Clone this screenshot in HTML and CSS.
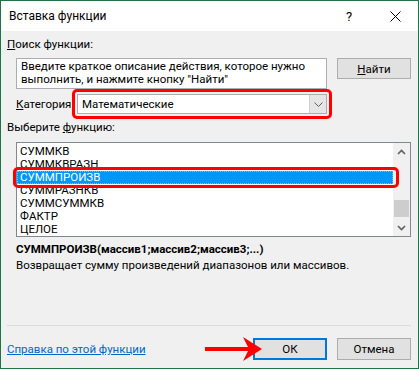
FILE: index.html
```html
<!DOCTYPE html>
<html lang="ru">
  <head>
    <meta charset="UTF-8" />
    <title>Вставка функции</title>
    <link rel="stylesheet" href="styles.css">
  </head>
  <body>
    <div class="dialog">
      <div class="titlebar">
        <span class="title">Вставка функции</span>
        <span class="title-btn help">?</span>
        <span class="title-btn">
          <svg width="11" height="11" viewBox="0 0 11 11">
            <path d="M0.5 0.5 L10.5 10.5 M10.5 0.5 L0.5 10.5" stroke="#000" stroke-width="1" fill="none" />
          </svg>
        </span>
      </div>

      <div class="content">
        <div class="label"><u>П</u>оиск функции:</div>

        <div class="search-row">
          <div class="search-box">Введите краткое описание действия, которое нужно выполнить, и нажмите кнопку "Найти"</div>
          <button class="btn find"><u>Н</u>айти</button>
        </div>

        <div class="category-row">
          <span class="cat-label"><u>К</u>атегория</span>
          <div class="mark">
            <div class="select">
              <span class="select-value">Математические</span>
              <span class="select-drop">
                <svg width="9" height="5" viewBox="0 0 9 5">
                  <polyline points="0.5,0.5 4.5,4.5 8.5,0.5" stroke="#606060" stroke-width="1" fill="none" />
                </svg>
              </span>
            </div>
          </div>
        </div>

        <div class="label list-label">Выберите <u>ф</u>ункцию:</div>

        <div class="listbox">
          <div class="items">
            <div class="item">СУММКВ</div>
            <div class="item">СУММКВРАЗН</div>
            <div class="item selected">СУММПРОИЗВ</div>
            <div class="item">СУММРАЗНКВ</div>
            <div class="item">СУММСУММКВ</div>
            <div class="item">ФАКТР</div>
            <div class="item">ЦЕЛОЕ</div>
          </div>
          <div class="scrollbar">
            <span class="arrow">
              <svg width="9" height="6" viewBox="0 0 9 6">
                <polyline points="1,5 4.5,1.5 8,5" stroke="#606060" stroke-width="1.6" fill="none" />
              </svg>
            </span>
            <div class="track"><div class="thumb"></div></div>
            <span class="arrow">
              <svg width="9" height="6" viewBox="0 0 9 6">
                <polyline points="1,1 4.5,4.5 8,1" stroke="#606060" stroke-width="1.6" fill="none" />
              </svg>
            </span>
          </div>
        </div>

        <div class="signature">СУММПРОИЗВ(массив1;массив2;массив3;...)</div>
        <div class="desc">Возвращает сумму произведений диапазонов или массивов.</div>

        <div class="separator"></div>

        <div class="footer">
          <a class="help-link">Справка по этой функции</a>
          <svg class="pointer" width="58" height="24" viewBox="0 0 58 24">
            <rect x="0" y="10" width="46" height="4" fill="#f00" />
            <polygon points="38,0 57,12 38,24 44,12" fill="#f00" />
          </svg>
          <button class="btn ok">ОК</button>
          <button class="btn cancel">Отмена</button>
        </div>
      </div>
    </div>
  </body>
</html>
```

FILE: styles.css
```css
* {
  box-sizing: border-box;
}

body {
  margin: 0;
  font-family: Roboto, "Noto Sans", sans-serif;
  font-size: 11.5px;
  color: #000;
  background: #fff;
}

.dialog {
  width: 419px;
  height: 369px;
  border: 1px solid #217346;
  background: #f0f0f0;
  display: flex;
  flex-direction: column;
}

.titlebar {
  height: 30px;
  background: #fff;
  display: flex;
  align-items: center;
}

.title {
  flex: 1;
  padding-left: 8px;
  font-size: 12px;
}

.title-btn {
  width: 46px;
  height: 30px;
  display: flex;
  align-items: center;
  justify-content: center;
}

.help {
  font-size: 13px;
}

.content {
  flex: 1;
  display: flex;
  flex-direction: column;
  padding: 0 7px 0 6px;
}

.label {
  line-height: 15px;
  margin-top: 6px;
}

.search-row {
  display: flex;
  align-items: flex-start;
  margin-top: 6px;
  padding-left: 9px;
}

.search-box {
  width: 311px;
  height: 31px;
  background: #fff;
  border: 1px solid #abadb3;
  padding: 1px 4px;
  line-height: 13px;
}

.btn {
  width: 74px;
  height: 21px;
  padding: 0;
  background: #e1e1e1;
  border: 1px solid #adadad;
  font: inherit;
  color: #000;
}

.find {
  margin-left: 10px;
}

.category-row {
  display: flex;
  align-items: center;
  padding-left: 9px;
}

.cat-label {
  width: 56px;
}

.mark {
  width: 260px;
  border: 3px solid #f00;
  border-radius: 5px;
  padding: 2px;
  background: #f0f0f0;
}

.select {
  height: 20px;
  display: flex;
  background: #fff;
  border: 1px solid #abadb3;
}

.select-value {
  flex: 1;
  line-height: 18px;
  padding-left: 4px;
}

.select-drop {
  width: 17px;
  display: flex;
  align-items: center;
  justify-content: center;
  background: #e5e5e5;
  border-left: 1px solid #cccccc;
}

.list-label {
  margin-top: 1px;
}

.listbox {
  display: flex;
  width: 395px;
  height: 95px;
  margin: 7px 0 0 9px;
  background: #fff;
  border: 1px solid #828790;
}

.items {
  flex: 1;
  padding-top: 2px;
}

.item {
  height: 13px;
  line-height: 13px;
  padding-left: 3px;
}

.selected {
  position: relative;
  background: #0097fb;
  color: #fff;
  outline: 1px dotted #e8a060;
  outline-offset: -1px;
}

.selected::after {
  content: "";
  position: absolute;
  left: -4px;
  right: -6px;
  top: -4px;
  bottom: -4px;
  border: 3px solid #f00;
  border-radius: 5px;
}

.scrollbar {
  width: 17px;
  display: flex;
  flex-direction: column;
  background: #f0f0f0;
}

.arrow {
  height: 17px;
  display: flex;
  align-items: center;
  justify-content: center;
}

.track {
  flex: 1;
}

.thumb {
  width: 15px;
  height: 17px;
  margin: 40px 0 0 1px;
  background: #cdcdcd;
}

.signature {
  font-weight: bold;
  line-height: 16px;
  margin-top: 4px;
  padding-left: 9px;
}

.desc {
  line-height: 16px;
  padding-left: 9px;
}

.separator {
  height: 1px;
  margin-top: 52px;
  background: #dcdcdc;
}

.footer {
  position: relative;
  display: flex;
  align-items: center;
  height: 22px;
  margin-top: 12px;
}

.help-link {
  flex: 1;
  color: #0066cc;
  text-decoration: underline;
  cursor: pointer;
}

.ok {
  height: 22px;
  margin-right: 10px;
  border: 2px solid #0078d7;
}

.cancel {
  height: 22px;
}

.pointer {
  position: absolute;
  left: 198px;
  top: -1px;
  z-index: 1;
}
```
